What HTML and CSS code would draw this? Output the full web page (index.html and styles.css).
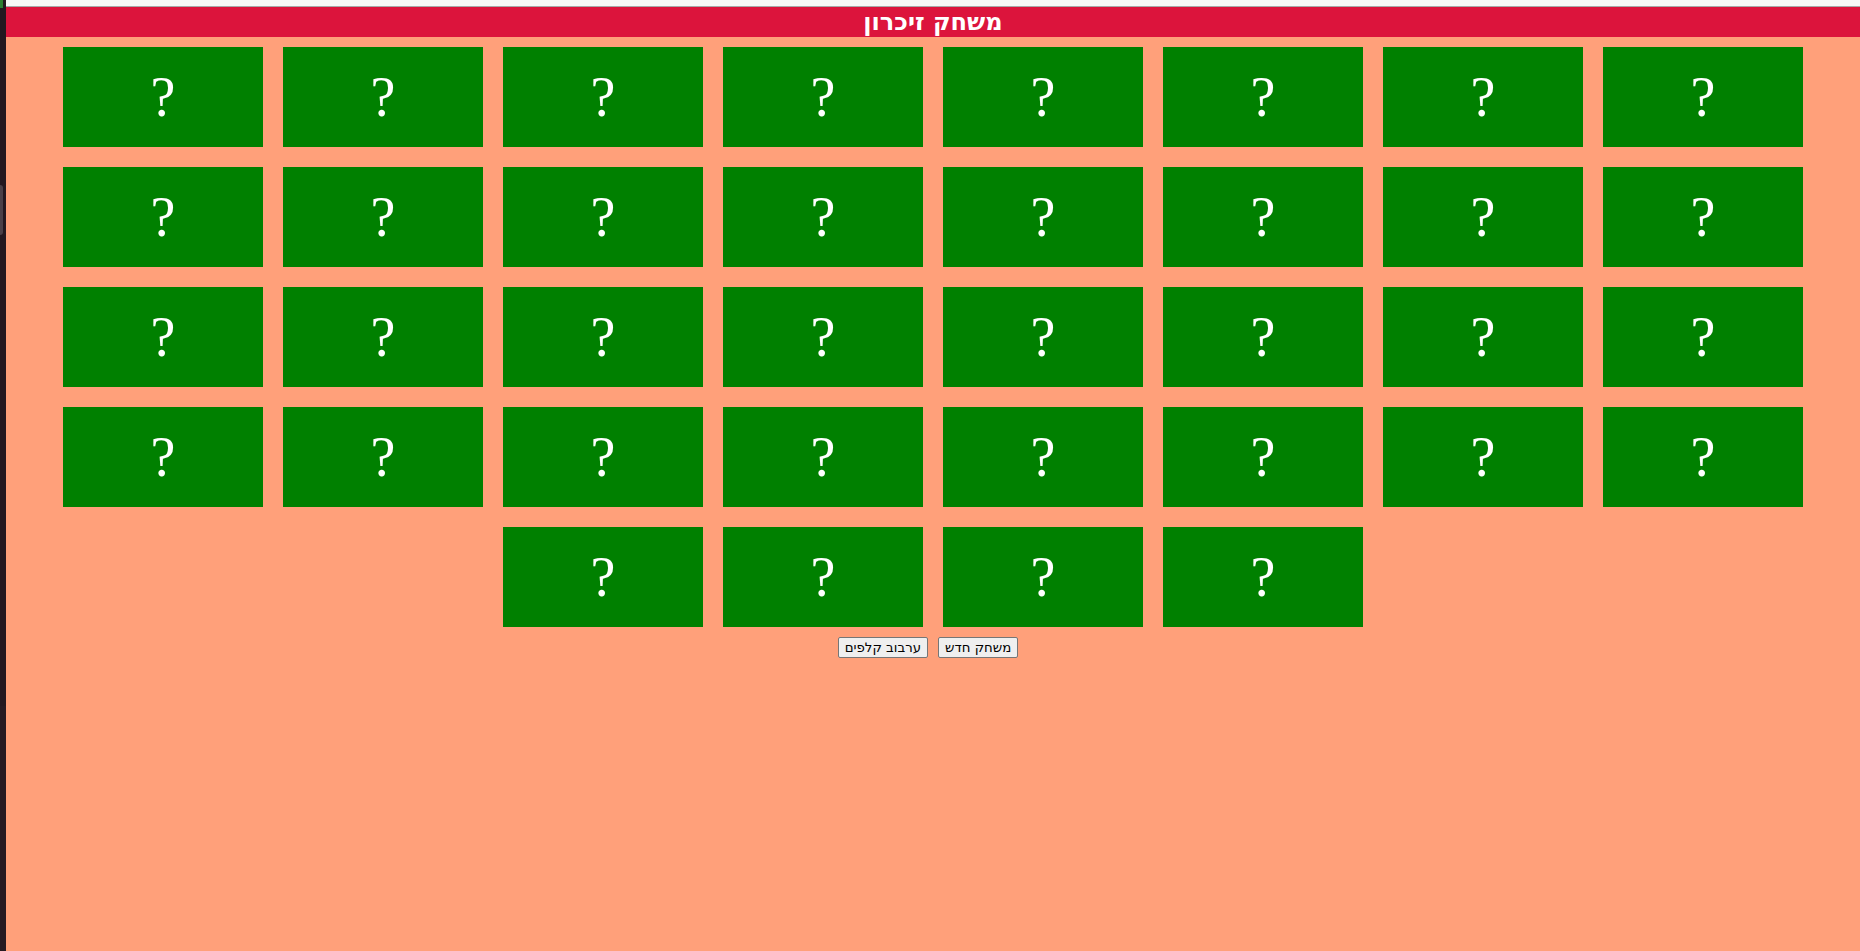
FILE: index.html
```html
<!DOCTYPE html>
<html lang="he">
<head>
<meta charset="utf-8">
<title>משחק זיכרון</title>
<link rel="stylesheet" href="styles.css">
</head>
<body>
<div class="frame">
  <div class="side-strip">
    <div class="side-dot"></div>
    <div class="side-handle"></div>
    <div class="side-lower"></div>
  </div>
  <div class="page">
    <div class="top-strip"></div>
    <h1 class="title">משחק זיכרון</h1>
    <div class="board">
      <div class="card">?</div><div class="card">?</div><div class="card">?</div><div class="card">?</div>
      <div class="card">?</div><div class="card">?</div><div class="card">?</div><div class="card">?</div>
      <div class="card">?</div><div class="card">?</div><div class="card">?</div><div class="card">?</div>
      <div class="card">?</div><div class="card">?</div><div class="card">?</div><div class="card">?</div>
      <div class="card">?</div><div class="card">?</div><div class="card">?</div><div class="card">?</div>
      <div class="card">?</div><div class="card">?</div><div class="card">?</div><div class="card">?</div>
      <div class="card">?</div><div class="card">?</div><div class="card">?</div><div class="card">?</div>
      <div class="card">?</div><div class="card">?</div><div class="card">?</div><div class="card">?</div>
      <div class="card">?</div><div class="card">?</div><div class="card">?</div><div class="card">?</div>
    </div>
    <div class="controls">
      <button class="btn">משחק חדש</button>
      <button class="btn">ערבוב קלפים</button>
    </div>
  </div>
</div>
</body>
</html>
```
FILE: styles.css
```css
html, body {
  margin: 0;
  padding: 0;
  height: 100%;
}
body {
  background: #ffa07a;
  overflow: hidden;
}
.frame {
  display: flex;
  height: 951px;
}
.side-strip {
  width: 6px;
  flex: none;
  background: #231820;
  display: flex;
  flex-direction: column;
}
.side-dot {
  width: 3px;
  height: 8px;
  background: #2e7d32;
}
.side-handle {
  width: 3px;
  height: 50px;
  margin-top: 177px;
  background: #4a4048;
  border-radius: 0 3px 3px 0;
}
.side-lower {
  margin-top: auto;
  height: 245px;
  background: #261a22;
}
.page {
  flex: 1;
  display: flex;
  flex-direction: column;
  background: #ffa07a;
  direction: rtl;
}
.top-strip {
  height: 6px;
  background: #f8f8f8;
  border-bottom: 1px solid #a8a8a8;
}
.title {
  margin: 0;
  height: 30px;
  line-height: 30px;
  background: #dc143c;
  color: #ffffff;
  text-align: center;
  font-family: "DejaVu Sans", sans-serif;
  font-size: 24px;
  font-weight: bold;
}
.board {
  display: flex;
  flex-wrap: wrap;
  justify-content: center;
  direction: ltr;
}
.card {
  width: 200px;
  height: 100px;
  margin: 10px;
  background: #008000;
  color: #ffffff;
  text-align: center;
  font-family: "Liberation Serif", serif;
  font-size: 56px;
  line-height: 100px;
}
.controls {
  display: flex;
  justify-content: center;
  align-items: flex-start;
  gap: 10px;
  padding-right: 10px;
}
.btn {
  margin: 0;
  font-family: "DejaVu Sans", sans-serif;
  font-size: 13.333px;
  padding: 1px 6px;
  height: 21px;
  background: #efefef;
  border: 1px solid #767676;
  border-radius: 2px;
  color: #000000;
}
```
